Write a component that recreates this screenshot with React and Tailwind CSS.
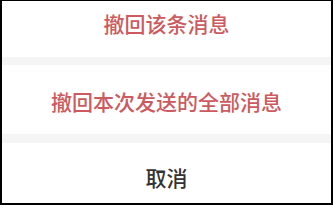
export default function App() {
  const font = { fontFamily: '"Noto Sans CJK SC", "Noto Sans", sans-serif' };
  return (
    <div
      className="w-[333px] h-[205px] border-black border-t-[1px] border-x-[2px] border-b-[2px] bg-white flex flex-col"
      style={font}
    >
      <button className="h-[56px] flex items-center justify-center pb-[10px] text-[21px] font-medium text-[#cc5a60]">
        撤回该条消息
      </button>
      <div className="h-[8px] bg-[#f5f5f5]" />
      <button className="h-[69px] flex items-center justify-center pt-[4px] text-[21px] font-medium text-[#cc5a60]">
        撤回本次发送的全部消息
      </button>
      <div className="h-[9px] bg-[#f5f5f5]" />
      <button className="flex-1 flex items-center justify-center pt-[9px] text-[21px] font-medium text-[#333333]">
        取消
      </button>
    </div>
  );
}
